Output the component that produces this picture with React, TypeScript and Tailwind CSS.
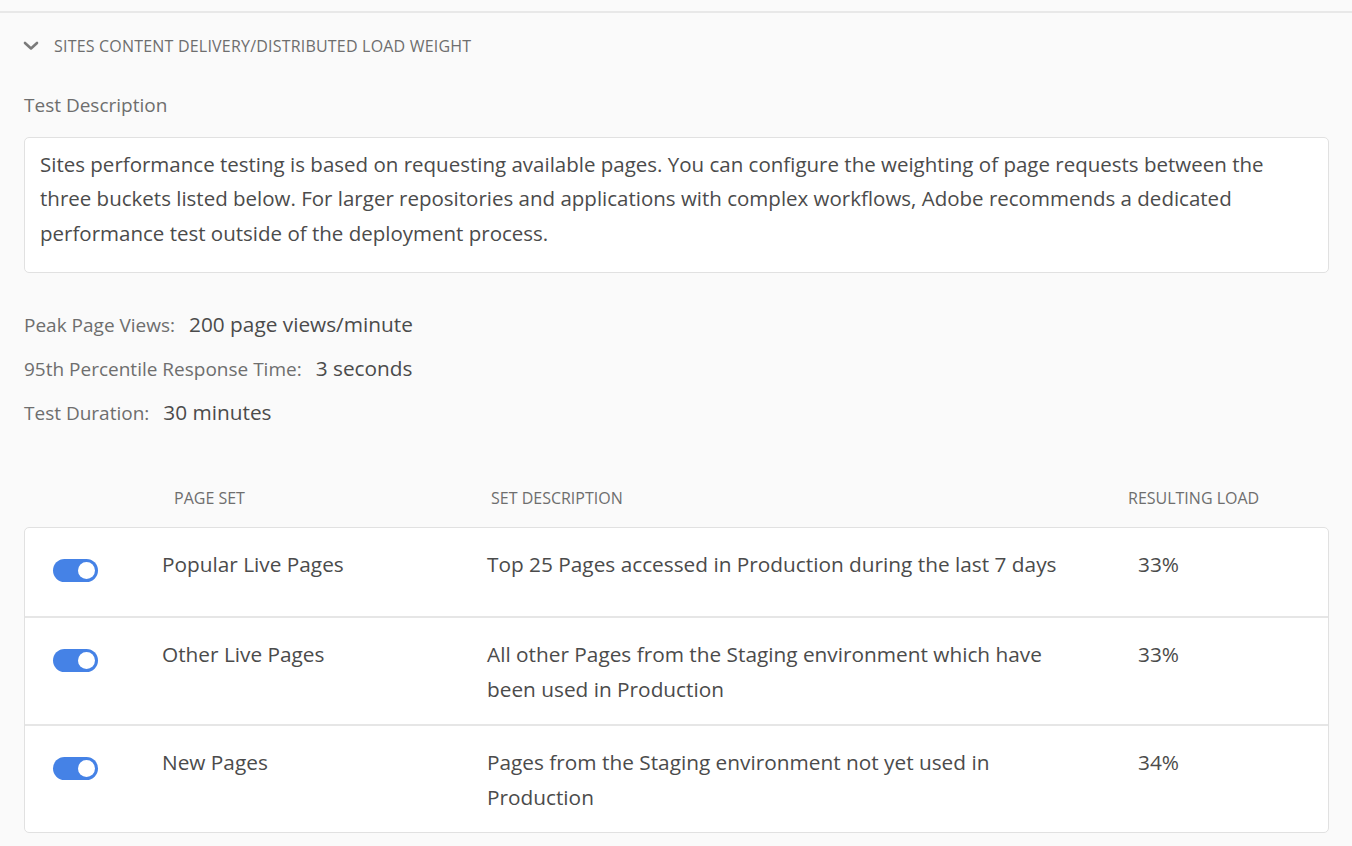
import React from 'react';

interface PageSet {
  id: number;
  name: string;
  description: string;
  load: string;
  enabled: boolean;
}

const pageSets: PageSet[] = [
  { id: 1, name: 'Popular Live Pages', description: 'Top 25 Pages accessed in Production during the last 7 days', load: '33%', enabled: true },
  { id: 2, name: 'Other Live Pages', description: 'All other Pages from the Staging environment which have been used in Production', load: '33%', enabled: true },
  { id: 3, name: 'New Pages', description: 'Pages from the Staging environment not yet used in Production', load: '34%', enabled: true },
];

const stats = [
  { label: 'Peak Page Views:', value: '200 page views/minute' },
  { label: '95th Percentile Response Time:', value: '3 seconds' },
  { label: 'Test Duration:', value: '30 minutes' },
];

const Toggle: React.FC<{ on: boolean }> = ({ on }) => (
  <div className={`w-[45px] h-[23px] rounded-full flex items-center px-[3px] ${on ? 'bg-[#4582e6] justify-end' : 'bg-[#b3b3b3] justify-start'}`}>
    <div className="w-[17px] h-[17px] rounded-full bg-white" />
  </div>
);

const App: React.FC = () => {
  return (
    <div className="min-h-screen bg-[#fafafa] pt-[11px] text-[#4b4b4b]" style={{ fontFamily: '"Open Sans", sans-serif' }}>
      <div className="border-t-2 border-[#e8e8e8]">
        <div className="pl-6 pr-[23px]">
          <div className="flex items-center h-[66px] pb-[1px]">
            <svg width="16" height="10" viewBox="0 0 16 10" className="ml-[-1px]">
              <path d="M2 2 L8 7.5 L14 2" fill="none" stroke="#7a7a7a" strokeWidth="2.6" strokeLinecap="round" strokeLinejoin="round" />
            </svg>
            <h2 className="ml-[15px] text-[16px] uppercase text-[#6e6e6e] tracking-[0.2px]">
              Sites Content Delivery/Distributed Load Weight
            </h2>
          </div>

          <div className="text-[19px] text-[#6e6e6e] leading-[24px] mt-[14px]">Test Description</div>

          <div className="mt-[20px] bg-white border border-[#e1e1e1] rounded-[5px] px-[15px] pt-[9px] pb-[21px] h-[136px]">
            <p className="text-[20.5px] leading-[34.3px] text-[#4b4b4b]">
              Sites performance testing is based on requesting available pages. You can configure the weighting of page requests between the three buckets listed below. For larger repositories and applications with complex workflows, Adobe recommends a dedicated performance test outside of the deployment process.
            </p>
          </div>

          <div className="mt-[36px] flex flex-col gap-[16px]">
            {stats.map((s) => (
              <div key={s.label} className="flex items-baseline h-[28px]">
                <span className="text-[19px] text-[#6e6e6e]">{s.label}</span>
                <span className="ml-[14px] text-[20.8px] text-[#4b4b4b]">{s.value}</span>
              </div>
            ))}
          </div>

          <div className="mt-[61px] grid grid-cols-[150px_317px_637px_1fr] text-[16px] uppercase text-[#6e6e6e] h-[41px]">
            <div />
            <div>Page Set</div>
            <div>Set Description</div>
            <div>Resulting Load</div>
          </div>

          <div className="bg-white border border-[#e1e1e1] rounded-[5px]">
            {pageSets.map((item, i) => (
              <div
                key={item.id}
                className={`grid grid-cols-[137px_325px_651px_1fr] pt-[19px] text-[20.8px] leading-[35px] ${i > 0 ? 'border-t-2 border-[#e6e6e6]' : ''} ${i === 0 ? 'h-[88px]' : 'h-[108px]'}`}
              >
                <div className="pl-[28px] pt-[12px]">
                  <Toggle on={item.enabled} />
                </div>
                <div>{item.name}</div>
                <div className="w-[604px]">{item.description}</div>
                <div>{item.load}</div>
              </div>
            ))}
          </div>
        </div>
      </div>
    </div>
  );
};

export default App;
